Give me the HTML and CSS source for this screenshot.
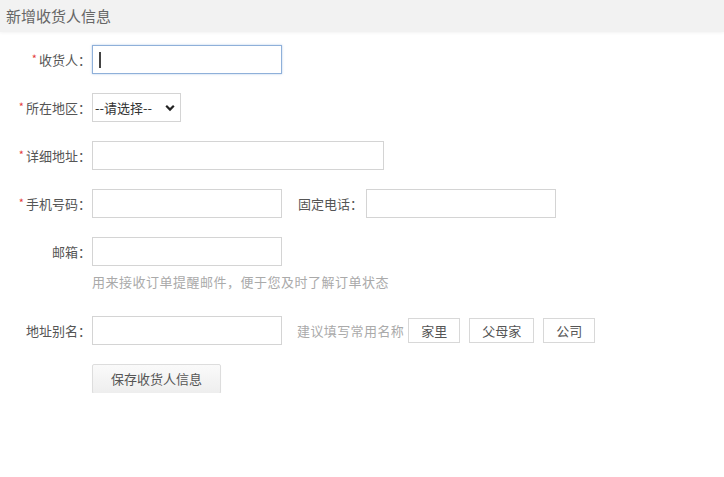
FILE: index.html
```html
<!DOCTYPE html>
<html lang="zh-CN">
<head>
<meta charset="utf-8">
<title>新增收货人信息</title>
<link rel="stylesheet" href="styles.css">
</head>
<body>
<div class="panel">
  <div class="panel-head">新增收货人信息</div>
  <form class="form">
    <div class="row">
      <label class="label"><span class="req">*</span>收货人：</label>
      <span class="field-wrap">
        <input class="input input-focus" type="text">
        <span class="caret"></span>
      </span>
    </div>
    <div class="row">
      <label class="label"><span class="req">*</span>所在地区：</label>
      <span class="select-wrap">
        <select class="select"><option>--请选择--</option></select>
        <svg class="chev" width="10" height="8" viewBox="0 0 10 8"><path d="M1.2 1.8 L5 5.6 L8.8 1.8" fill="none" stroke="#222" stroke-width="2.2"/></svg>
      </span>
    </div>
    <div class="row">
      <label class="label"><span class="req">*</span>详细地址：</label>
      <input class="input input-wide" type="text">
    </div>
    <div class="row">
      <label class="label"><span class="req">*</span>手机号码：</label>
      <input class="input" type="text">
      <label class="label-inline">固定电话：</label>
      <input class="input" type="text">
    </div>
    <div class="row-block">
      <div class="row row-tight">
        <label class="label">邮箱：</label>
        <input class="input" type="text">
      </div>
      <div class="hint-line">用来接收订单提醒邮件，便于您及时了解订单状态</div>
    </div>
    <div class="row">
      <label class="label">地址别名：</label>
      <input class="input" type="text">
      <span class="suggest">建议填写常用名称</span>
      <div class="tags">
        <button type="button" class="tag">家里</button>
        <button type="button" class="tag">父母家</button>
        <button type="button" class="tag">公司</button>
      </div>
    </div>
    <div class="row">
      <span class="label"></span>
      <button type="button" class="save">保存收货人信息</button>
    </div>
  </form>
</div>
</body>
</html>
```

FILE: styles.css
```css
* { box-sizing: border-box; }
html, body { margin: 0; padding: 0; background: #fff; }
body {
  font-family: "Noto Sans CJK SC", "Noto Sans", "Liberation Sans", sans-serif;
  font-size: 13px;
  color: #555;
}
.panel-head {
  height: 32px;
  line-height: 32px;
  padding-left: 6px;
  background: #f2f2f2;
  color: #666;
  font-size: 15px;
  box-shadow: 0 1px 3px rgba(0,0,0,0.05);
}
.form {
  padding-top: 13px;
  display: flex;
  flex-direction: column;
  gap: 19px;
}
.row {
  display: flex;
  align-items: center;
  height: 29px;
}
.row-block { display: flex; flex-direction: column; margin-bottom: 7px; }
.label {
  width: 92px;
  text-align: right;
  color: #555;
  flex: none;
  padding-right: 1px;
}
.req { color: #e4393c; font-size: 11px; margin-right: 2px; position: relative; top: -2px; }
.input {
  width: 190px;
  height: 29px;
  border: 1px solid #d4d4d4;
  padding: 0 6px;
  font: inherit;
  outline: none;
  background: #fff;
}
.input-wide { width: 292px; }
.field-wrap { position: relative; display: inline-flex; }
.input-focus {
  border-color: #8fb0d9;
  box-shadow: 0 0 2px rgba(100,150,210,0.5);
}
.caret {
  position: absolute;
  left: 7px;
  top: 7px;
  width: 2px;
  height: 16px;
  background: #444;
}
.select-wrap { position: relative; display: inline-flex; }
.select {
  appearance: none;
  -webkit-appearance: none;
  width: 89px;
  height: 29px;
  border: 1px solid #d4d4d4;
  background: #fff;
  font: inherit;
  color: #333;
  padding: 0 0 0 2px;
  outline: none;
}
.chev {
  position: absolute;
  right: 6px;
  top: 11px;
  pointer-events: none;
}
.label-inline {
  margin-left: 16px;
  width: 68px;
  color: #555;
}
.hint-line {
  margin-top: 8px;
  margin-left: 92px;
  line-height: 16px;
  color: #aaa;
  letter-spacing: 0.5px;
}
.suggest {
  margin-left: 15px;
  color: #aaa;
  letter-spacing: 0.4px;
}
.tags { display: flex; gap: 9px; margin-left: 4px; }
.tag {
  height: 25px;
  padding: 0 12px;
  border: 1px solid #d8d8d8;
  background: #fff;
  font: inherit;
  color: #555;
  cursor: pointer;
}
.save {
  height: 30px;
  padding: 0 18px;
  border: 1px solid #ddd;
  border-radius: 2px;
  background: linear-gradient(#fafafa, #eeeeee);
  font: inherit;
  color: #555;
  box-shadow: 0 1px 1px rgba(0,0,0,0.06);
}
```
